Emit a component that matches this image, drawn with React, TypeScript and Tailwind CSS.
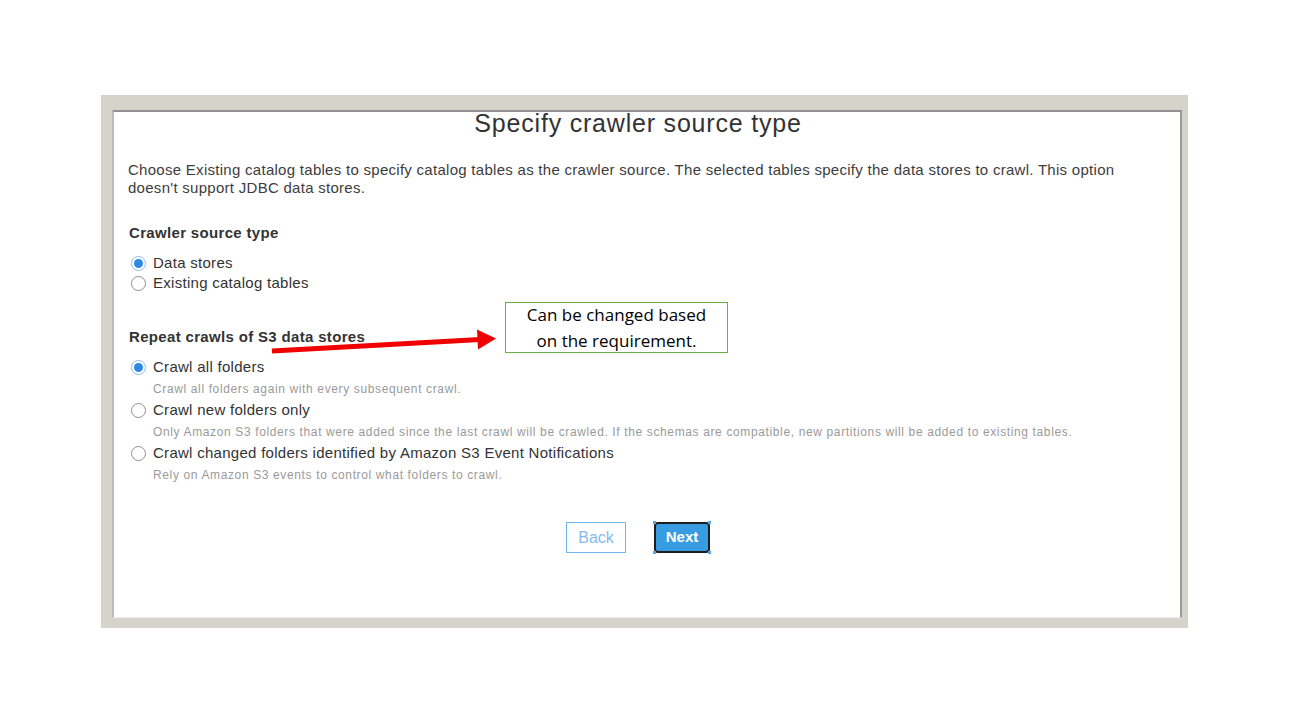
import React from "react";

const arial = { fontFamily: '"Liberation Sans", Arial, sans-serif' };

const Radio = ({ checked }: { checked?: boolean }) =>
  checked ? (
    <span className="flex h-[15px] w-[15px] flex-shrink-0 items-center justify-center rounded-full border border-[#8cbde8] bg-white">
      <span className="h-[9px] w-[9px] rounded-full bg-[#2e8ae2]" />
    </span>
  ) : (
    <span className="h-[15px] w-[15px] flex-shrink-0 rounded-full border border-[#8f8f8f] bg-white" />
  );

const options = [
  {
    label: "Crawl all folders",
    hint: "Crawl all folders again with every subsequent crawl.",
    checked: true,
  },
  {
    label: "Crawl new folders only",
    hint: "Only Amazon S3 folders that were added since the last crawl will be crawled. If the schemas are compatible, new partitions will be added to existing tables.",
  },
  {
    label: "Crawl changed folders identified by Amazon S3 Event Notifications",
    hint: "Rely on Amazon S3 events to control what folders to crawl.",
  },
];

const Handle = ({ className }: { className: string }) => (
  <span className={`absolute h-[3px] w-[3px] bg-[#5aa7e6] ${className}`} />
);

export default function App() {
  return (
    <div className="relative h-[723px] w-[1290px] overflow-hidden bg-white pl-[101px] pt-[95px]" style={arial}>
      <div className="h-[533px] w-[1087px] bg-[#d6d3cb] pb-[10px] pl-[11px] pr-[6px] pt-[15px]">
        <div className="h-full w-full border-b border-l-2 border-r-2 border-t-2 border-b-[#eeeeee] border-l-[#b9bcc2] border-r-[#9a9a9a] border-t-[#8f9094] bg-white pl-[14px] text-[#333]">
          <h1 className="mt-[-1px] pr-[32px] text-center text-[25px] leading-[24px] tracking-[0.8px] text-[#333]">
            Specify crawler source type
          </h1>
          <p className="mt-[26px] text-[15px] leading-[18px] tracking-[0.28px] text-[#3d3d3d]">
            Choose Existing catalog tables to specify catalog tables as the crawler source. The selected tables specify the data stores to crawl. This option
            <br />
            doesn't support JDBC data stores.
          </p>

          <h2 className="mt-[27px] pl-[1px] text-[15px] font-bold leading-[18px] tracking-[0.33px] text-[#333]">
            Crawler source type
          </h2>
          <div className="mt-[11px] flex flex-col pl-[3px]">
            <label className="flex h-[20px] items-center gap-[7px] text-[15px] tracking-[0.28px]">
              <Radio checked />
              <span>Data stores</span>
            </label>
            <label className="flex h-[20px] items-center gap-[7px] text-[15px] tracking-[0.28px]">
              <Radio />
              <span>Existing catalog tables</span>
            </label>
          </div>

          <h2 className="mt-[35px] pl-[1px] text-[15px] font-bold leading-[18px] tracking-[0.33px] text-[#333]">
            Repeat crawls of S3 data stores
          </h2>
          <div className="mt-[11px] flex flex-col gap-[3px] pl-[3px]">
            {options.map((o) => (
              <div key={o.label} className="flex flex-col gap-[4px]">
                <label className="flex h-[20px] items-center gap-[7px] text-[15px] tracking-[0.28px]">
                  <Radio checked={o.checked} />
                  <span>{o.label}</span>
                </label>
                <p className="pl-[22px] text-[12px] leading-[16px] tracking-[0.63px] text-[#9a9a9a]">{o.hint}</p>
              </div>
            ))}
          </div>

          <div className="mt-[39px] flex justify-center gap-[28px] pr-[32px]">
            <button className="h-[31px] w-[60px] border border-[#6fb7ec] bg-white text-[16px] text-[#88b9ea]">
              Back
            </button>
            <div className="relative">
              <button className="h-[31px] w-[56px] rounded-[4px] border-2 border-[#1d1d1d] bg-[#389ce2] text-[15px] font-bold text-white">
                Next
              </button>
              <Handle className="left-[-1px] top-[-1px]" />
              <Handle className="right-[-1px] top-[-1px]" />
              <Handle className="bottom-[-1px] left-[-1px]" />
              <Handle className="bottom-[-1px] right-[-1px]" />
            </div>
          </div>
        </div>
      </div>

      {/* annotation overlay */}
      <svg className="absolute left-0 top-0" width="1290" height="723" viewBox="0 0 1290 723">
        <line x1="272" y1="351" x2="480" y2="339.5" stroke="#f00000" strokeWidth="5" />
        <polygon points="496,338.5 477,329.5 478,349.5" fill="#f00000" />
      </svg>
      <div
        className="absolute left-[505px] top-[302px] flex h-[51px] w-[223px] flex-col items-center justify-center border border-[#70ad47] bg-white text-center text-[17px] leading-[26px] text-black"
        style={{ fontFamily: '"Open Sans", "Noto Sans", sans-serif' }}
      >
        <span>Can be changed based</span>
        <span>on the requirement.</span>
      </div>
    </div>
  );
}
